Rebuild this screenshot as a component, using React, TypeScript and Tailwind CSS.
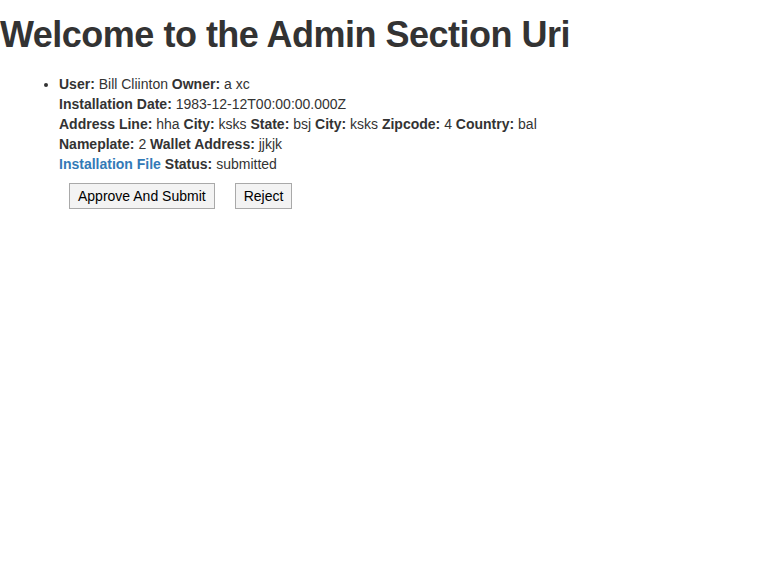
const entry = {
  user: "Bill Cliinton",
  owner: "a xc",
  installationDate: "1983-12-12T00:00:00.000Z",
  addressLine: "hha",
  city: "ksks",
  state: "bsj",
  zipcode: "4",
  country: "bal",
  nameplate: "2",
  walletAddress: "jjkjk",
  status: "submitted",
}

function Field({ label, value }: { label: string; value: string }) {
  return (
    <>
      <b className="font-bold">{label}:</b> {value}{" "}
    </>
  )
}

export default function App() {
  return (
    <div className="min-h-[583px] bg-white text-[#333] text-[14px] leading-[20px] font-['Liberation_Sans',Arial,sans-serif]">
      <h1 className="mt-[15px] mb-[19px] text-[36px] leading-[39.6px] font-bold tracking-[-0.5px]">
        Welcome to the Admin Section Uri
      </h1>

      <ul className="list-disc pl-[59px]">
        <li>
          <Field label="User" value={entry.user} />
          <Field label="Owner" value={entry.owner} />
          <br />
          <Field label="Installation Date" value={entry.installationDate} />
          <br />
          <Field label="Address Line" value={entry.addressLine} />
          <Field label="City" value={entry.city} />
          <Field label="State" value={entry.state} />
          <Field label="City" value={entry.city} />
          <Field label="Zipcode" value={entry.zipcode} />
          <Field label="Country" value={entry.country} />
          <br />
          <Field label="Nameplate" value={entry.nameplate} />
          <Field label="Wallet Address" value={entry.walletAddress} />
          <br />
          <a href="#" className="font-bold text-[#337ab7]">
            Installation File
          </a>{" "}
          <Field label="Status" value={entry.status} />
          <div className="flex gap-5 pl-[10px] pt-[9px]">
            <button className="h-[26px] px-[8px] border border-[#a9a9a9] bg-[#f3f3f3] text-[14px] text-black">
              Approve And Submit
            </button>
            <button className="h-[26px] px-[8px] border border-[#a9a9a9] bg-[#f3f3f3] text-[14px] text-black">
              Reject
            </button>
          </div>
        </li>
      </ul>
    </div>
  )
}
